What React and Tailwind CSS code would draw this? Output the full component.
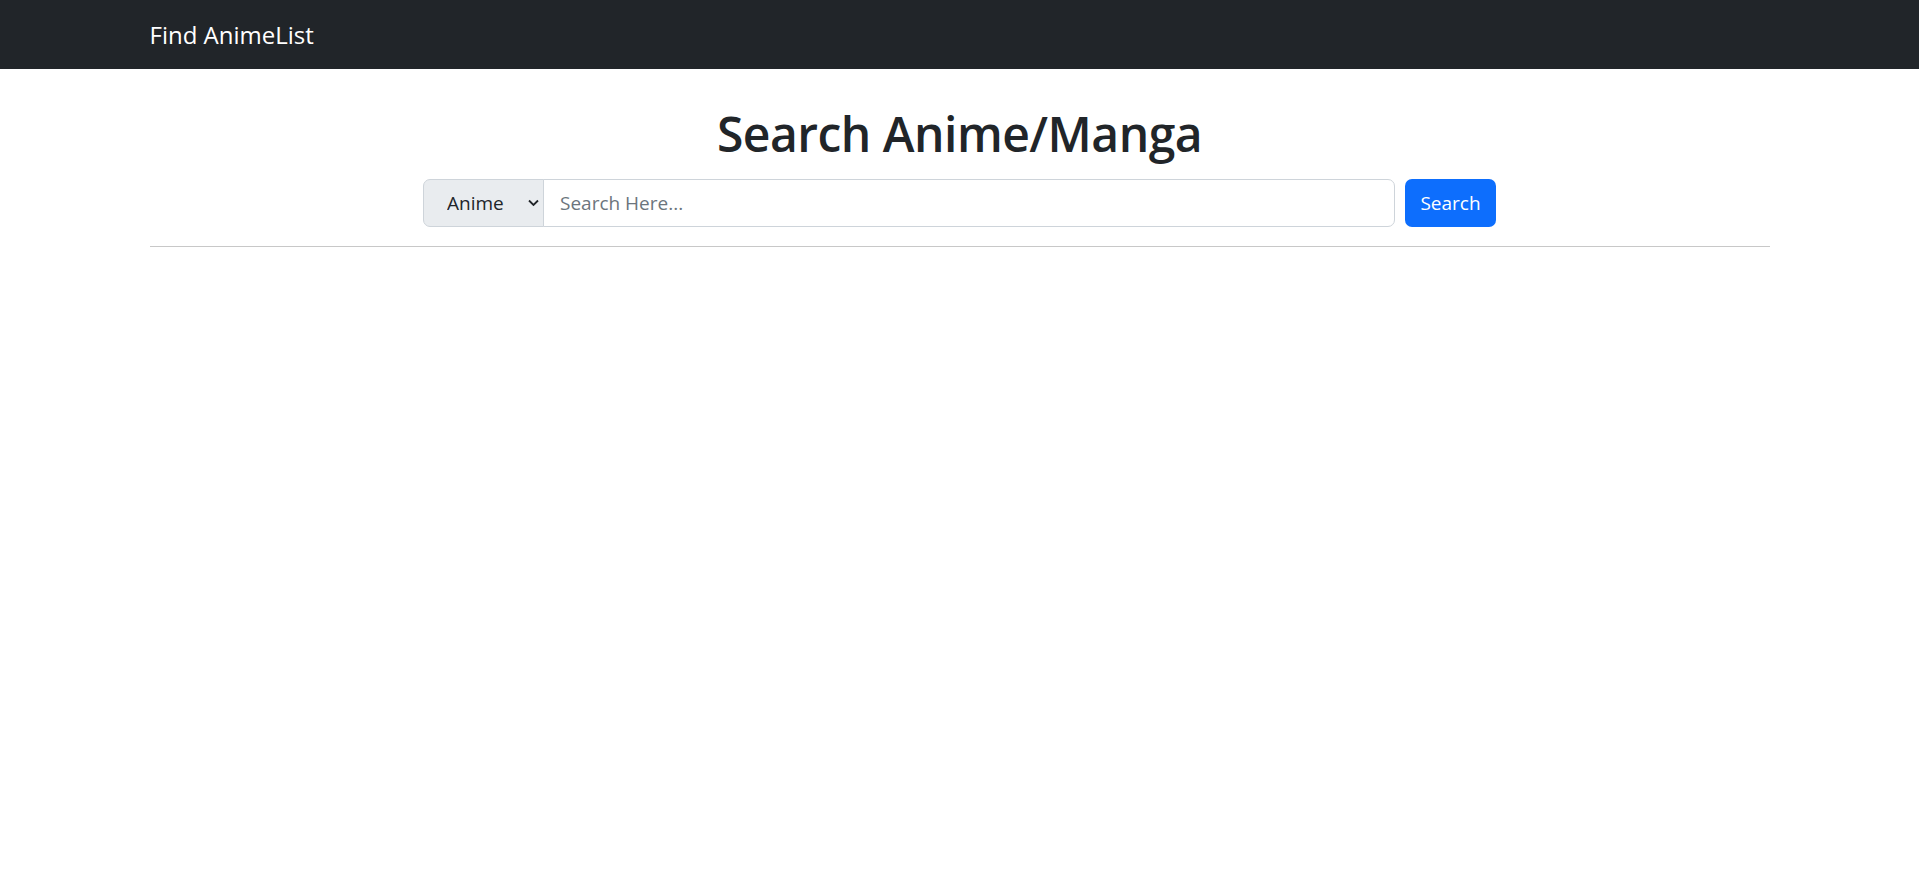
import React, { useState } from 'react';

export default function App() {
  const [kind, setKind] = useState('anime');
  const [query, setQuery] = useState('');

  return (
    <div className="min-h-screen bg-white text-[#212529]" style={{ fontFamily: '"Open Sans", "Noto Sans", sans-serif' }}>
      <nav className="h-[69px] bg-[#212529]">
        <div className="mx-auto flex h-full w-[1620px] items-center">
          <a href="#" className="text-[24px] text-white">Find AnimeList</a>
        </div>
      </nav>

      <main className="mx-auto w-[1620px]">
        <h1 className="mt-[35px] text-center text-[48px] font-semibold leading-[60px] tracking-[-0.5px]">Search Anime/Manga</h1>

        <form
          onSubmit={(event) => event.preventDefault()}
          className="mt-[15px] flex items-center justify-center gap-[10px]"
        >
          <div className="flex h-[48px] w-[972px]">
            <div className="relative h-full w-[121px] shrink-0">
              <select
                value={kind}
                onChange={(event) => setKind(event.target.value)}
                className="h-full w-full appearance-none rounded-l-[7px] border border-[#ced4da] bg-[#e9ecef] pl-[23px] text-[19px] text-[#212529] outline-none"
              >
                <option value="anime">Anime</option>
                <option value="manga">Manga</option>
              </select>
              <svg
                className="pointer-events-none absolute right-[5px] top-1/2 -translate-y-1/2"
                width="11"
                height="7"
                viewBox="0 0 11 7"
                fill="none"
              >
                <path d="M1 1l4.5 4.5L10 1" stroke="#212529" strokeWidth="1.8" />
              </svg>
            </div>
            <input
              value={query}
              onChange={(event) => setQuery(event.target.value)}
              placeholder="Search Here..."
              className="-ml-px h-full min-w-0 flex-1 rounded-r-[7px] border border-[#ced4da] bg-white px-[16px] text-[19px] text-[#212529] outline-none placeholder:text-[#6c757d]"
            />
          </div>
          <button
            type="submit"
            className="h-[48px] w-[91px] rounded-[7px] bg-[#0d6efd] text-[19px] text-white"
          >
            Search
          </button>
        </form>

        <hr className="mt-[19px] border-t border-[#c8c8c8]" />
      </main>
    </div>
  );
}
